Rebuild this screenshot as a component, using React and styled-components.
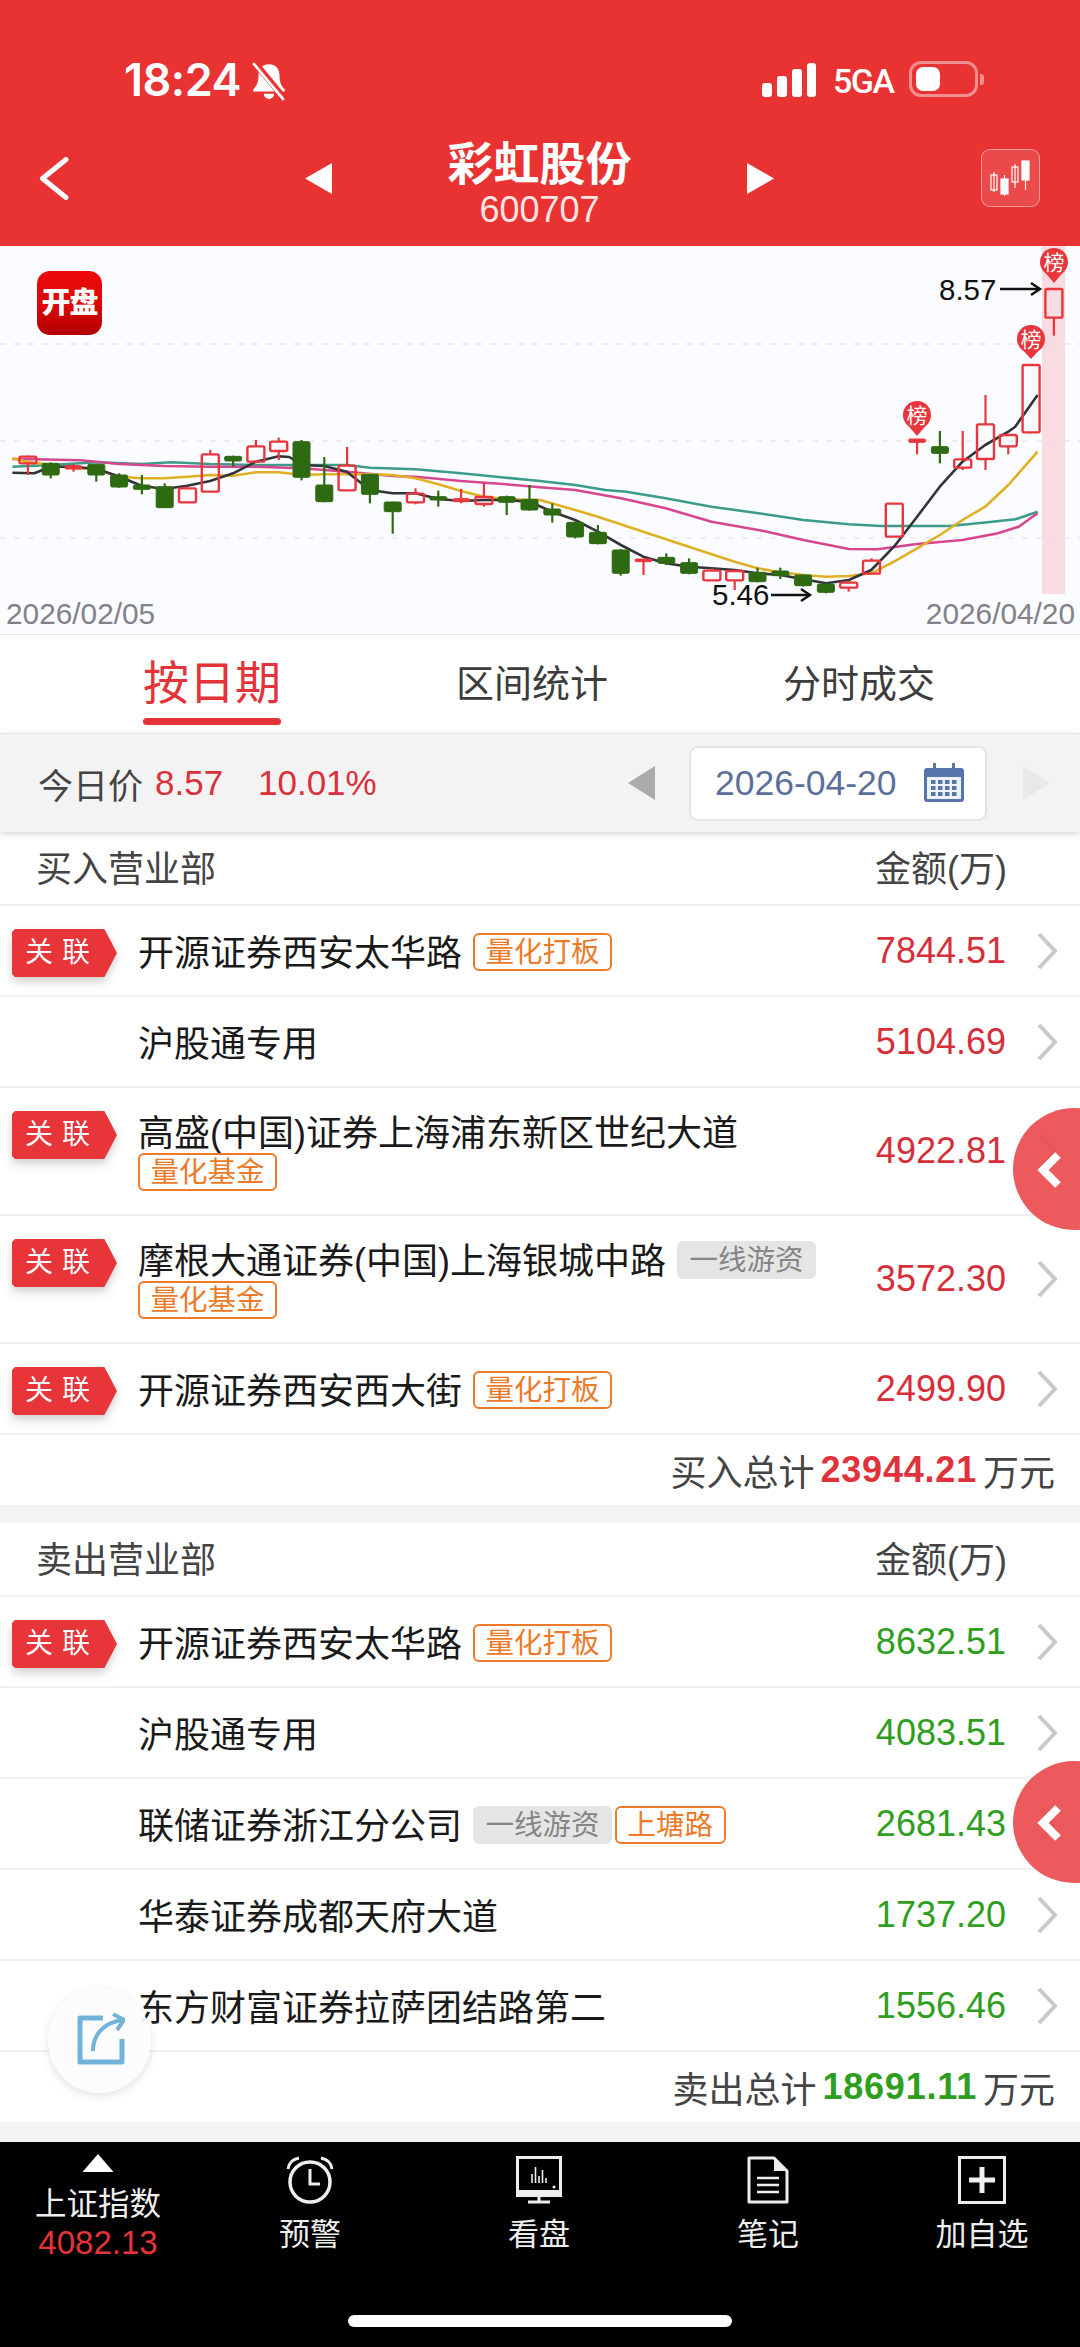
import styled, { createGlobalStyle } from "styled-components";

const sans = `"Liberation Sans", "Noto Sans CJK SC", sans-serif`;

const GlobalStyle = createGlobalStyle`
  html, body {
    margin: 0;
    padding: 0;
    background: #f3f3f3;
  }
  body {
    font-family: ${sans};
  }
  * {
    box-sizing: border-box;
  }
`;

const Page = styled.div`
  position: relative;
  width: 1080px;
  height: 2347px;
  display: flex;
  flex-direction: column;
  overflow: hidden;
  background: #f3f3f3;
`;

// red top part
const Header = styled.header`
  height: 246px;
  flex: none;
  background: #e93232;
  color: #fff;
  display: flex;
  flex-direction: column;
`;

const StatusBar = styled.div`
  height: 104px;
  padding: 60px 0 0 124px;
  display: flex;
  align-items: flex-start;
`;

const Clock = styled.span`
  font-family: Inter, sans-serif;
  font-weight: 600;
  font-size: 45px;
  line-height: 40px;
  letter-spacing: -0.5px;
  width: 125px;
`;

const SignalWrap = styled.div`
  margin-left: 472px;
  margin-top: 2px;
`;

const NetLabel = styled.span`
  font-family: Roboto, sans-serif;
  font-weight: 500;
  font-size: 34px;
  line-height: 36px;
  letter-spacing: -1.5px;
  margin-left: 16px;
  margin-top: 3px;
  width: 76px;
`;

const Battery = styled.div`
  width: 69px;
  height: 36px;
  margin-top: 1px;
  padding: 3px 4px;
  border: 3px solid rgba(255, 255, 255, 0.45);
  border-radius: 12px;
  position: relative;
  &::after {
    content: "";
    position: absolute;
    right: -9px;
    top: 10px;
    width: 4px;
    height: 11px;
    border-radius: 0 3px 3px 0;
    background: rgba(255, 255, 255, 0.45);
  }
`;

const BatteryFill = styled.div`
  width: 24px;
  height: 24px;
  background: #fff;
  border-radius: 7px;
`;

const Nav = styled.div`
  flex: 1;
  display: flex;
  align-items: flex-start;
  padding-left: 39px;
`;

const BackBtn = styled.div`
  width: 30px;
  margin-top: 53px;
  height: 43px;
`;

const Triangle = styled.div`
  width: 27px;
  height: 31px;
  margin-top: 59px;
  margin-left: ${(p) => p.$ml || 0}px;
  background: ${(p) => p.$color || "#fff"};
  clip-path: ${(p) =>
    p.$dir === "left"
      ? "polygon(100% 0, 100% 100%, 0 50%)"
      : "polygon(0 0, 100% 50%, 0 100%)"};
`;

const TitleBlock = styled.div`
  width: 415px;
  text-align: center;
`;

const Title = styled.div`
  font-size: 46px;
  font-weight: 700;
  line-height: 50px;
  margin-top: 35px;
`;

const Code = styled.div`
  font-size: 36px;
  line-height: 40px;
  margin-top: 1px;
  color: #fbe3e3;
`;

const SwitchBtn = styled.div`
  width: 59px;
  height: 58px;
  margin-left: 207px;
  margin-top: 45px;
  background: rgba(255, 255, 255, 0.12);
  border: 1px solid rgba(255, 255, 255, 0.45);
  border-radius: 9px;
  display: flex;
  align-items: center;
  justify-content: center;
`;

// chart
const ChartBox = styled.section`
  position: relative;
  height: 389px;
  flex: none;
  background: #fbfcff;
  border-bottom: 1px solid #e8e8e8;
`;

const ChartSvg = styled.svg`
  display: block;
  overflow: visible;
`;

const OpenBadge = styled.div`
  position: absolute;
  left: 37px;
  top: 25px;
  width: 65px;
  height: 64px;
  border-radius: 13px;
  background: linear-gradient(180deg, #ee0a0a 0%, #d90808 55%, #b30000 100%);
  color: #fff;
  font-size: 29px;
  font-weight: 900;
  line-height: 64px;
  letter-spacing: -1px;
  text-align: center;
  white-space: nowrap;
`;

const DateAxis = styled.div`
  display: flex;
  justify-content: space-between;
  padding: 0 5px 0 6px;
  margin-top: 3px;
  font-size: 29.8px;
  line-height: 34px;
  color: #808288;
`;

// tabs
const Tabs = styled.div`
  height: 98px;
  flex: none;
  background: #fff;
  display: flex;
  gap: 175px;
  padding-left: 143px;
  align-items: flex-start;
`;

const Tab = styled.div`
  padding-top: ${(p) => (p.$active ? 20 : 26)}px;
  font-size: ${(p) => (p.$active ? 46 : 38)}px;
  line-height: ${(p) => (p.$active ? 56 : 46)}px;
  color: ${(p) => (p.$active ? "#e5333a" : "#3c3c3c")};
  white-space: nowrap;
  &::after {
    content: "";
    display: ${(p) => (p.$active ? "block" : "none")};
    height: 7px;
    margin-top: 7px;
    border-radius: 4px;
    background: #e5333a;
  }
`;

const DateBar = styled.div`
  position: relative;
  z-index: 1;
  height: 99px;
  flex: none;
  display: flex;
  align-items: center;
  padding-left: 38px;
  background: #f3f3f3;
  border-top: 1px solid #e6e6e6;
  box-shadow: 0 2px 6px rgba(0, 0, 0, 0.16);
  font-size: 35px;
  color: #444;
`;

const PriceLabel = styled.span`
  width: 117px;
`;

const PriceValue = styled.span`
  color: #d9303a;
  width: ${(p) => p.$w}px;
`;

const DateField = styled.div`
  width: 298px;
  height: 75px;
  margin-left: 34px;
  padding-left: 24px;
  display: flex;
  align-items: center;
  background: #fff;
  border: 2px solid #e4e4e4;
  border-radius: 9px;
  font-size: 35.5px;
  color: #5b6f9b;
`;

const DateText = styled.span`
  width: 208px;
`;

const DateArrow = styled(Triangle)`
  margin-top: 0;
  height: 34px;
`;

// lists
const ListArea = styled.div`
  flex: 1;
  display: flex;
  flex-direction: column;
`;

const Panel = styled.section`
  background: #fff;
  margin-bottom: 18px;
`;

const PanelHead = styled.div`
  height: 74px;
  padding: 0 73px 4px 36px;
  display: flex;
  align-items: center;
  justify-content: space-between;
  border-bottom: 2px solid #f0f0f0;
  font-size: 36px;
  color: #444;
`;

const Row = styled.div`
  height: ${(p) => (p.$tall ? 128 : 91)}px;
  display: flex;
  align-items: center;
  padding-right: 23px;
  border-bottom: 2px solid #f0f0f0;
`;

const TagSlot = styled.div`
  width: 138px;
  flex: none;
  align-self: flex-start;
  padding: 23px 0 0 12px;
`;

const TagShadow = styled.div`
  width: 105px;
  filter: drop-shadow(0 5px 5px rgba(0, 0, 0, 0.18));
`;

const Tag = styled.div`
  height: 48px;
  padding-left: 13px;
  background: #e7353a;
  color: #fff;
  font-size: 28px;
  line-height: 48px;
  letter-spacing: 9px;
  white-space: nowrap;
  clip-path: polygon(0 3px, 3px 0, 88% 0, 100% 50%, 88% 100%, 3px 100%, 0 calc(100% - 3px));
`;

const RowBody = styled.div`
  flex: 1;
  min-width: 0;
  display: flex;
  flex-direction: column;
  align-items: flex-start;
`;

const NameLine = styled.div`
  display: flex;
  align-items: center;
  height: 40px;
  font-size: 36px;
  color: #1a1a1a;
  white-space: nowrap;
`;

const Name = styled.span`
  margin-right: 11px;
  margin-top: -2px;
`;

const Badge = styled.span`
  height: 38px;
  padding: 0 10.5px;
  margin-right: 3px;
  margin-top: 2px;
  border-radius: 6px;
  font-size: 28.5px;
  line-height: 34px;
  white-space: nowrap;
  border: 2px solid ${(p) => (p.$gray ? "#e5e5e5" : "#ec7a28")};
  background: ${(p) => (p.$gray ? "#e5e5e5" : "#fff")};
  color: ${(p) => (p.$gray ? "#858585" : "#ec7a28")};
`;

const Amount = styled.div`
  font-size: 36px;
  color: ${(p) => (p.$sell ? "#2f9e1f" : "#d5303a")};
  margin-right: 30px;
`;

const TotalRow = styled.div`
  height: 70px;
  padding-right: 25px;
  display: flex;
  align-items: center;
  justify-content: flex-end;
  gap: 6px;
  font-size: 36px;
  color: #444;
`;

const TotalValue = styled.b`
  letter-spacing: 0.8px;
  color: ${(p) => (p.$sell ? "#2f9e1f" : "#e0323a")};
`;

// floating things
const SideHandle = styled.div`
  position: absolute;
  left: 1013px;
  top: ${(p) => p.$top}px;
  width: 122px;
  height: 122px;
  padding: 43px 0 0 24px;
  border-radius: 50%;
  background: rgba(234, 72, 76, 0.9);
`;

const ShareBtn = styled.div`
  position: absolute;
  left: 48px;
  top: 1988px;
  width: 103px;
  height: 105px;
  padding: 25px 0 0 29px;
  border-radius: 50%;
  background: rgba(252, 252, 252, 0.92);
  box-shadow: 0 3px 10px rgba(0, 0, 0, 0.12);
`;

// bottom bar
const Footer = styled.footer`
  height: 205px;
  flex: none;
  background: #000;
  color: #eee;
  display: flex;
  flex-direction: column;
  padding-bottom: 20px;
`;

const FooterGrid = styled.div`
  display: grid;
  grid-template-columns: 196px 228px 230px 228px 200px;
`;

const FooterItem = styled.div`
  display: flex;
  flex-direction: column;
  align-items: center;
  padding-top: 14px;
  font-size: 31px;
  line-height: 36px;
`;

const IndexItem = styled(FooterItem)`
  padding-top: 12px;
`;

const IndexName = styled.div`
  margin-top: 15px;
  line-height: 34px;
  font-size: 31.5px;
`;

const IndexValue = styled.div`
  margin-top: 4px;
  font-size: 33px;
  color: #e5333a;
`;

const FooterLabel = styled.div`
  margin-top: 13px;
`;

const HomeBar = styled.div`
  width: 384px;
  height: 12px;
  margin: auto auto 0;
  border-radius: 6px;
  background: #fff;
`;

// candles: [hollow/filled kind, wick top, body top, body bottom, wick bottom], read off the zoomed picture
const candles = [
  ["r", 632, 635, 655, 690], ["g", 652, 655, 690, 700], ["s", 657, 662, 672, 680], ["g", 658, 658, 690, 710],
  ["g", 685, 690, 726, 728], ["g", 690, 720, 733, 748], ["g", 715, 725, 788, 788], ["r", 728, 730, 772, 772],
  ["r", 615, 628, 740, 740], ["g", 632, 634, 648, 665], ["r", 585, 604, 650, 652], ["r", 578, 590, 618, 645],
  ["g", 585, 590, 697, 706], ["g", 636, 720, 770, 772], ["r", 606, 662, 736, 736], ["g", 688, 688, 748, 775],
  ["g", 770, 771, 800, 866], ["r", 730, 746, 772, 778], ["g", 737, 755, 765, 785], ["s", 732, 761, 770, 775],
  ["r", 712, 756, 777, 785], ["g", 752, 755, 772, 810], ["g", 720, 763, 795, 797], ["g", 775, 792, 810, 833],
  ["g", 830, 832, 876, 880], ["g", 840, 862, 896, 898], ["g", 912, 915, 985, 992], ["s", 942, 942, 950, 990],
  ["g", 925, 937, 955, 960], ["g", 940, 953, 985, 988], ["r", 970, 977, 1006, 1008], ["r", 975, 978, 1006, 1035],
  ["g", 968, 982, 1010, 1012], ["g", 968, 978, 992, 1002], ["g", 988, 990, 1022, 1025], ["g", 1015, 1017, 1042, 1045],
  ["r", 1008, 1013, 1028, 1040], ["r", 940, 947, 986, 988], ["r", 775, 776, 875, 875], ["s", 582, 582, 592, 628],
  ["g", 558, 605, 625, 655], ["r", 558, 643, 668, 675], ["r", 450, 538, 642, 675], ["r", 568, 570, 604, 628],
  ["r", 358, 360, 562, 565], ["r", 130, 132, 218, 272],
];

const yy = (v) => v / 3 - 1;
const leftPts = (pts) => pts.map(([x, y]) => `${(x / 2.904).toFixed(1)},${yy(y).toFixed(1)}`);
const rightPts = (pts) => pts.map(([x, y]) => `${(540 + x / 2.904).toFixed(1)},${yy(y).toFixed(1)}`);

const maLines = [
  {
    color: "#3c9c8c",
    left: [[36, 665], [147, 660], [281, 652], [411, 657], [498, 652], [610, 657], [743, 660], [877, 660], [1007, 660], [1074, 668], [1207, 673], [1339, 685], [1470, 698], [1568, 708]],
    right: [[102, 720], [190, 735], [250, 740], [365, 760], [498, 785], [650, 807], [765, 825], [897, 838], [990, 843], [1190, 843], [1300, 832], [1380, 823], [1445, 800]],
  },
  {
    color: "#d6478f",
    left: [[36, 642], [100, 643], [235, 646], [347, 657], [477, 663], [610, 665], [743, 665], [877, 670], [1007, 680], [1140, 693], [1207, 695], [1339, 708], [1470, 718], [1568, 727]],
    right: [[102, 735], [235, 760], [365, 790], [498, 830], [650, 858], [765, 885], [897, 912], [980, 913], [1095, 897], [1227, 885], [1330, 865], [1390, 845], [1445, 805]],
  },
  {
    color: "#e0af24",
    left: [[36, 640], [81, 650], [147, 660], [214, 670], [281, 672], [347, 695], [411, 700], [477, 700], [544, 695], [610, 690], [677, 692], [743, 682], [809, 682], [877, 690], [941, 688], [1007, 688], [1074, 688], [1140, 690], [1207, 700], [1273, 718], [1339, 738], [1405, 755], [1470, 762], [1537, 765]],
    right: [[0, 765], [102, 795], [168, 815], [300, 860], [432, 905], [565, 950], [632, 970], [698, 982], [765, 990], [831, 995], [897, 993], [962, 985], [1028, 950], [1095, 910], [1161, 870], [1227, 825], [1293, 785], [1360, 720], [1445, 620]],
  },
  {
    color: "#333338",
    left: [[36, 683], [100, 685], [147, 665], [214, 665], [281, 672], [347, 695], [411, 722], [477, 732], [544, 722], [610, 708], [677, 685], [743, 650], [809, 634], [840, 636], [877, 660], [941, 663], [1007, 680], [1074, 735], [1140, 745], [1207, 745], [1273, 762], [1339, 768], [1405, 765], [1470, 765], [1537, 770]],
    right: [[36, 800], [102, 825], [168, 860], [235, 900], [300, 935], [366, 955], [432, 965], [498, 970], [565, 975], [632, 985], [698, 990], [765, 1003], [831, 1015], [897, 1005], [962, 975], [1028, 905], [1095, 815], [1161, 725], [1227, 650], [1293, 600], [1360, 560], [1380, 545], [1445, 450]],
  },
];

const RED = "#e8363c";
const GREEN = "#2e6a12";

const Candle = ({ data, index }) => {
  const [kind, top, bodyTop, bodyBottom, bottom] = data;
  const x = 27.9 + 22.8 * index;
  const color = kind === "g" ? GREEN : RED;
  return (
    <g>
      <line x1={x} x2={x} y1={yy(top)} y2={yy(bodyTop)} stroke={color} strokeWidth="2.2" />
      <line x1={x} x2={x} y1={yy(bodyBottom)} y2={yy(bottom)} stroke={color} strokeWidth="2.2" />
      <rect
        x={x - 8.5}
        y={yy(bodyTop)}
        width="17"
        height={(bodyBottom - bodyTop) / 3}
        rx="1.5"
        fill={kind === "r" ? "none" : color}
        stroke={color}
        strokeWidth={kind === "r" ? 2.4 : 1}
      />
    </g>
  );
};

const Pin = ({ x, y, tip }) => (
  <g>
    <path d={`M${x - 11} ${y + 8} L${x} ${tip} L${x + 11} ${y + 8} Z`} fill={RED} />
    <circle cx={x} cy={y} r="14" fill={RED} />
    <text x={x} y={y + 7.5} textAnchor="middle" fontSize="21" fill="#fff" fontFamily={sans}>
      榜
    </text>
  </g>
);

const Arrow = ({ x1, x2, y }) => (
  <g stroke="#111" strokeWidth="2.4" fill="none">
    <line x1={x1} x2={x2} y1={y} y2={y} />
    <path d={`M${x2 - 9} ${y - 6} L${x2} ${y} L${x2 - 9} ${y + 6}`} />
  </g>
);

const KLine = () => (
  <ChartSvg width="1080" height="348" viewBox="0 0 1080 348">
    <rect x="1042" y="0" width="23" height="348" fill="#f8dce2" />
    {[98, 195, 292].map((y) => (
      <line key={y} x1="0" x2="1080" y1={y} y2={y} stroke="#dedfe2" strokeWidth="1" strokeDasharray="6 8" />
    ))}
    {maLines.map((l) => (
      <polyline
        key={l.color}
        points={[...leftPts(l.left), ...rightPts(l.right)].join(" ")}
        fill="none"
        stroke={l.color}
        strokeWidth="2.6"
        strokeLinejoin="round"
      />
    ))}
    {candles.map((c, i) => (
      <Candle key={i} data={c} index={i} />
    ))}
    <Pin x={917} y={169} tip={190} />
    <Pin x={1031} y={93} tip={113} />
    <Pin x={1054} y={16} tip={37} />
    <text x="939" y="54" fontSize="29.5" fontFamily={sans} fill="#111">8.57</text>
    <Arrow x1={1000} x2={1040} y={43} />
    <text x="712" y="359" fontSize="29.5" fontFamily={sans} fill="#111">5.46</text>
    <Arrow x1={771} x2={810} y={349} />
  </ChartSvg>
);

const BellOff = () => (
  <svg width="40" height="40" viewBox="0 0 38 38" style={{ marginTop: 1 }}>
    <path d="M19 3c-7 0-10 5-10 11 0 7-2 10-5 13v2h30v-2c-3-3-5-6-5-13 0-6-3-11-10-11z" fill="#fff" />
    <path d="M14 31a5 5 0 0 0 10 0z" fill="#fff" />
    <path d="M5 1l29 35" stroke="#e93232" strokeWidth="6" />
    <path d="M4 2l29 35" stroke="#fff" strokeWidth="2.5" />
  </svg>
);

const Signal = () => (
  <svg width="56" height="36" viewBox="0 0 56 36" style={{ display: "block" }}>
    <rect x="1" y="21" width="10" height="14" rx="3" fill="#fff" />
    <rect x="16" y="14" width="10" height="21" rx="3" fill="#fff" />
    <rect x="31" y="7" width="10" height="28" rx="3" fill="#fff" />
    <rect x="46" y="1" width="9" height="34" rx="3" fill="#fff" />
  </svg>
);

const BackIcon = () => (
  <svg width="30" height="43" viewBox="0 0 30 43">
    <path d="M27 2.5L3.5 21.5L27 40.5" fill="none" stroke="#fff" strokeWidth="5" strokeLinecap="round" strokeLinejoin="round" />
  </svg>
);

const CandleIcon = () => (
  <svg width="42" height="36" viewBox="0 0 42 36">
    <g stroke="#fff" fill="none" strokeWidth="1.2">
      <rect x="1" y="15" width="6" height="15" />
      <line x1="4" x2="4" y1="12" y2="32" />
      <rect x="11" y="19" width="7" height="15" fill="#fff" />
      <line x1="14.5" x2="14.5" y1="15" y2="36" />
      <rect x="22" y="7" width="6" height="15" />
      <line x1="25" x2="25" y1="4" y2="28" />
      <rect x="32" y="1" width="7" height="19" fill="#fff" />
      <line x1="35.5" x2="35.5" y1="1" y2="30" />
    </g>
  </svg>
);

const CalendarIcon = () => (
  <svg width="42" height="40" viewBox="0 0 42 40">
    <rect x="1" y="5" width="40" height="34" rx="3" fill="#5875ab" />
    <rect x="4" y="14" width="34" height="22" fill="#eef1f8" />
    <rect x="10" y="0" width="3" height="10" fill="#5875ab" />
    <rect x="29" y="0" width="3" height="10" fill="#5875ab" />
    {[17, 23, 29].map((y) =>
      [8, 15, 22, 29].map((x) => <rect key={`${x}-${y}`} x={x} y={y} width="4.5" height="4" fill="#5875ab" />)
    )}
  </svg>
);

const RowChevron = () => (
  <svg width="21" height="36" viewBox="0 0 21 36" style={{ flex: "none" }}>
    <path d="M3 1L19 18L3 35" fill="none" stroke="#c9c9c9" strokeWidth="4" />
  </svg>
);

const HandleChevron = () => (
  <svg width="26" height="38" viewBox="0 0 26 38" style={{ display: "block" }}>
    <path d="M21 4L6 19L21 34" fill="none" stroke="#fff" strokeWidth="8" />
  </svg>
);

const ShareIcon = () => (
  <svg width="48" height="52" viewBox="0 0 48 52" style={{ display: "block" }}>
    <path d="M26 5H3v44h42V26" fill="none" stroke="#72b3da" strokeWidth="5" strokeLinejoin="round" />
    <path d="M16 38c0-16 10-28 29-31" fill="none" stroke="#72b3da" strokeWidth="4" />
    <path d="M36 1l11 6-7 10" fill="none" stroke="#72b3da" strokeWidth="4" />
  </svg>
);

const AlarmIcon = () => (
  <svg width="50" height="48" viewBox="0 0 50 48">
    <circle cx="25" cy="26" r="20" fill="none" stroke="#eee" strokeWidth="3.5" />
    <path d="M25 13v15h10" fill="none" stroke="#eee" strokeWidth="3" />
    <path d="M3 13c1-6 5-10 11-11M47 13c-1-6-5-10-11-11" fill="none" stroke="#eee" strokeWidth="3" />
  </svg>
);

const MonitorIcon = () => (
  <svg width="46" height="48" viewBox="0 0 46 48">
    <rect x="1.5" y="1.5" width="43" height="38" fill="none" stroke="#eee" strokeWidth="3" />
    <path d="M1 34h44v6H1z" fill="#eee" />
    <path d="M23 40v5M12 46h22" stroke="#eee" strokeWidth="3" />
    <path d="M16 27v-9M19.5 27V11M23 27v-7M26.5 27V14M30 27v-5" stroke="#eee" strokeWidth="1.6" />
    <circle cx="38" cy="31" r="1.5" fill="#eee" />
  </svg>
);

const NoteIcon = () => (
  <svg width="42" height="48" viewBox="0 0 42 48">
    <path d="M2 2h25l13 13v31H2z" fill="none" stroke="#eee" strokeWidth="3" strokeLinejoin="round" />
    <path d="M27 2v13h13z" fill="#eee" />
    <path d="M10 22h22M10 29h22M10 36h22" stroke="#eee" strokeWidth="2.5" />
  </svg>
);

const PlusIcon = () => (
  <svg width="48" height="48" viewBox="0 0 48 48">
    <rect x="1.5" y="1.5" width="45" height="45" fill="none" stroke="#eee" strokeWidth="3" />
    <path d="M24 11v26M11 24h26" stroke="#eee" strokeWidth="5" />
  </svg>
);

const UpTriangle = styled.div`
  width: 31px;
  height: 18px;
  background: #fff;
  clip-path: polygon(50% 0, 100% 100%, 0 100%);
`;

const buyRows = [
  { name: "开源证券西安太华路", amount: "7844.51", linked: true, badges: [{ text: "量化打板" }] },
  { name: "沪股通专用", amount: "5104.69" },
  { name: "高盛(中国)证券上海浦东新区世纪大道", amount: "4922.81", linked: true, second: "量化基金" },
  { name: "摩根大通证券(中国)上海银城中路", amount: "3572.30", linked: true, badges: [{ text: "一线游资", gray: true }], second: "量化基金" },
  { name: "开源证券西安西大街", amount: "2499.90", linked: true, badges: [{ text: "量化打板" }] },
];

const sellRows = [
  { name: "开源证券西安太华路", amount: "8632.51", linked: true, badges: [{ text: "量化打板" }] },
  { name: "沪股通专用", amount: "4083.51" },
  { name: "联储证券浙江分公司", amount: "2681.43", badges: [{ text: "一线游资", gray: true }, { text: "上塘路" }] },
  { name: "华泰证券成都天府大道", amount: "1737.20" },
  { name: "东方财富证券拉萨团结路第二", amount: "1556.46" },
];

const TraderRow = ({ row, sell }) => (
  <Row $tall={!!row.second}>
    <TagSlot>
      {row.linked && (
        <TagShadow>
          <Tag>关联</Tag>
        </TagShadow>
      )}
    </TagSlot>
    <RowBody>
      <NameLine>
        <Name>{row.name}</Name>
        {row.badges &&
          row.badges.map((b) => (
            <Badge key={b.text} $gray={b.gray}>
              {b.text}
            </Badge>
          ))}
      </NameLine>
      {row.second && <Badge>{row.second}</Badge>}
    </RowBody>
    <Amount $sell={sell}>{row.amount}</Amount>
    <RowChevron />
  </Row>
);

const TraderPanel = ({ title, rows, sell, totalLabel, total }) => (
  <Panel>
    <PanelHead>
      <span>{title}</span>
      <span>金额(万)</span>
    </PanelHead>
    {rows.map((r) => (
      <TraderRow key={r.name} row={r} sell={sell} />
    ))}
    <TotalRow>
      <span>{totalLabel}</span>
      <TotalValue $sell={sell}>{total}</TotalValue>
      <span>万元</span>
    </TotalRow>
  </Panel>
);

export default function App() {
  return (
    <Page>
      <GlobalStyle />
      <Header>
        <StatusBar>
          <Clock>18:24</Clock>
          <BellOff />
          <SignalWrap>
            <Signal />
          </SignalWrap>
          <NetLabel>5GA</NetLabel>
          <Battery>
            <BatteryFill />
          </Battery>
        </StatusBar>
        <Nav>
          <BackBtn>
            <BackIcon />
          </BackBtn>
          <Triangle $dir="left" $ml={236} />
          <TitleBlock>
            <Title>彩虹股份</Title>
            <Code>600707</Code>
          </TitleBlock>
          <Triangle $dir="right" />
          <SwitchBtn>
            <CandleIcon />
          </SwitchBtn>
        </Nav>
      </Header>

      <ChartBox>
        <KLine />
        <OpenBadge>开盘</OpenBadge>
        <DateAxis>
          <span>2026/02/05</span>
          <span>2026/04/20</span>
        </DateAxis>
      </ChartBox>

      <Tabs>
        <Tab $active>按日期</Tab>
        <Tab>区间统计</Tab>
        <Tab>分时成交</Tab>
      </Tabs>

      <DateBar>
        <PriceLabel>今日价</PriceLabel>
        <PriceValue $w={103}>8.57</PriceValue>
        <PriceValue $w={370}>10.01%</PriceValue>
        <DateArrow $dir="left" $color="#ababab" />
        <DateField>
          <DateText>2026-04-20</DateText>
          <CalendarIcon />
        </DateField>
        <DateArrow $dir="right" $color="#e8e8e8" $ml={36} />
      </DateBar>

      <ListArea>
        <TraderPanel title="买入营业部" rows={buyRows} totalLabel="买入总计" total="23944.21" />
        <TraderPanel title="卖出营业部" rows={sellRows} sell totalLabel="卖出总计" total="18691.11" />
      </ListArea>

      <Footer>
        <FooterGrid>
          <IndexItem>
            <UpTriangle />
            <IndexName>上证指数</IndexName>
            <IndexValue>4082.13</IndexValue>
          </IndexItem>
          <FooterItem>
            <AlarmIcon />
            <FooterLabel>预警</FooterLabel>
          </FooterItem>
          <FooterItem>
            <MonitorIcon />
            <FooterLabel>看盘</FooterLabel>
          </FooterItem>
          <FooterItem>
            <NoteIcon />
            <FooterLabel>笔记</FooterLabel>
          </FooterItem>
          <FooterItem>
            <PlusIcon />
            <FooterLabel>加自选</FooterLabel>
          </FooterItem>
        </FooterGrid>
        <HomeBar />
      </Footer>

      <SideHandle $top={1108}>
        <HandleChevron />
      </SideHandle>
      <SideHandle $top={1761}>
        <HandleChevron />
      </SideHandle>
      <ShareBtn>
        <ShareIcon />
      </ShareBtn>
    </Page>
  );
}
